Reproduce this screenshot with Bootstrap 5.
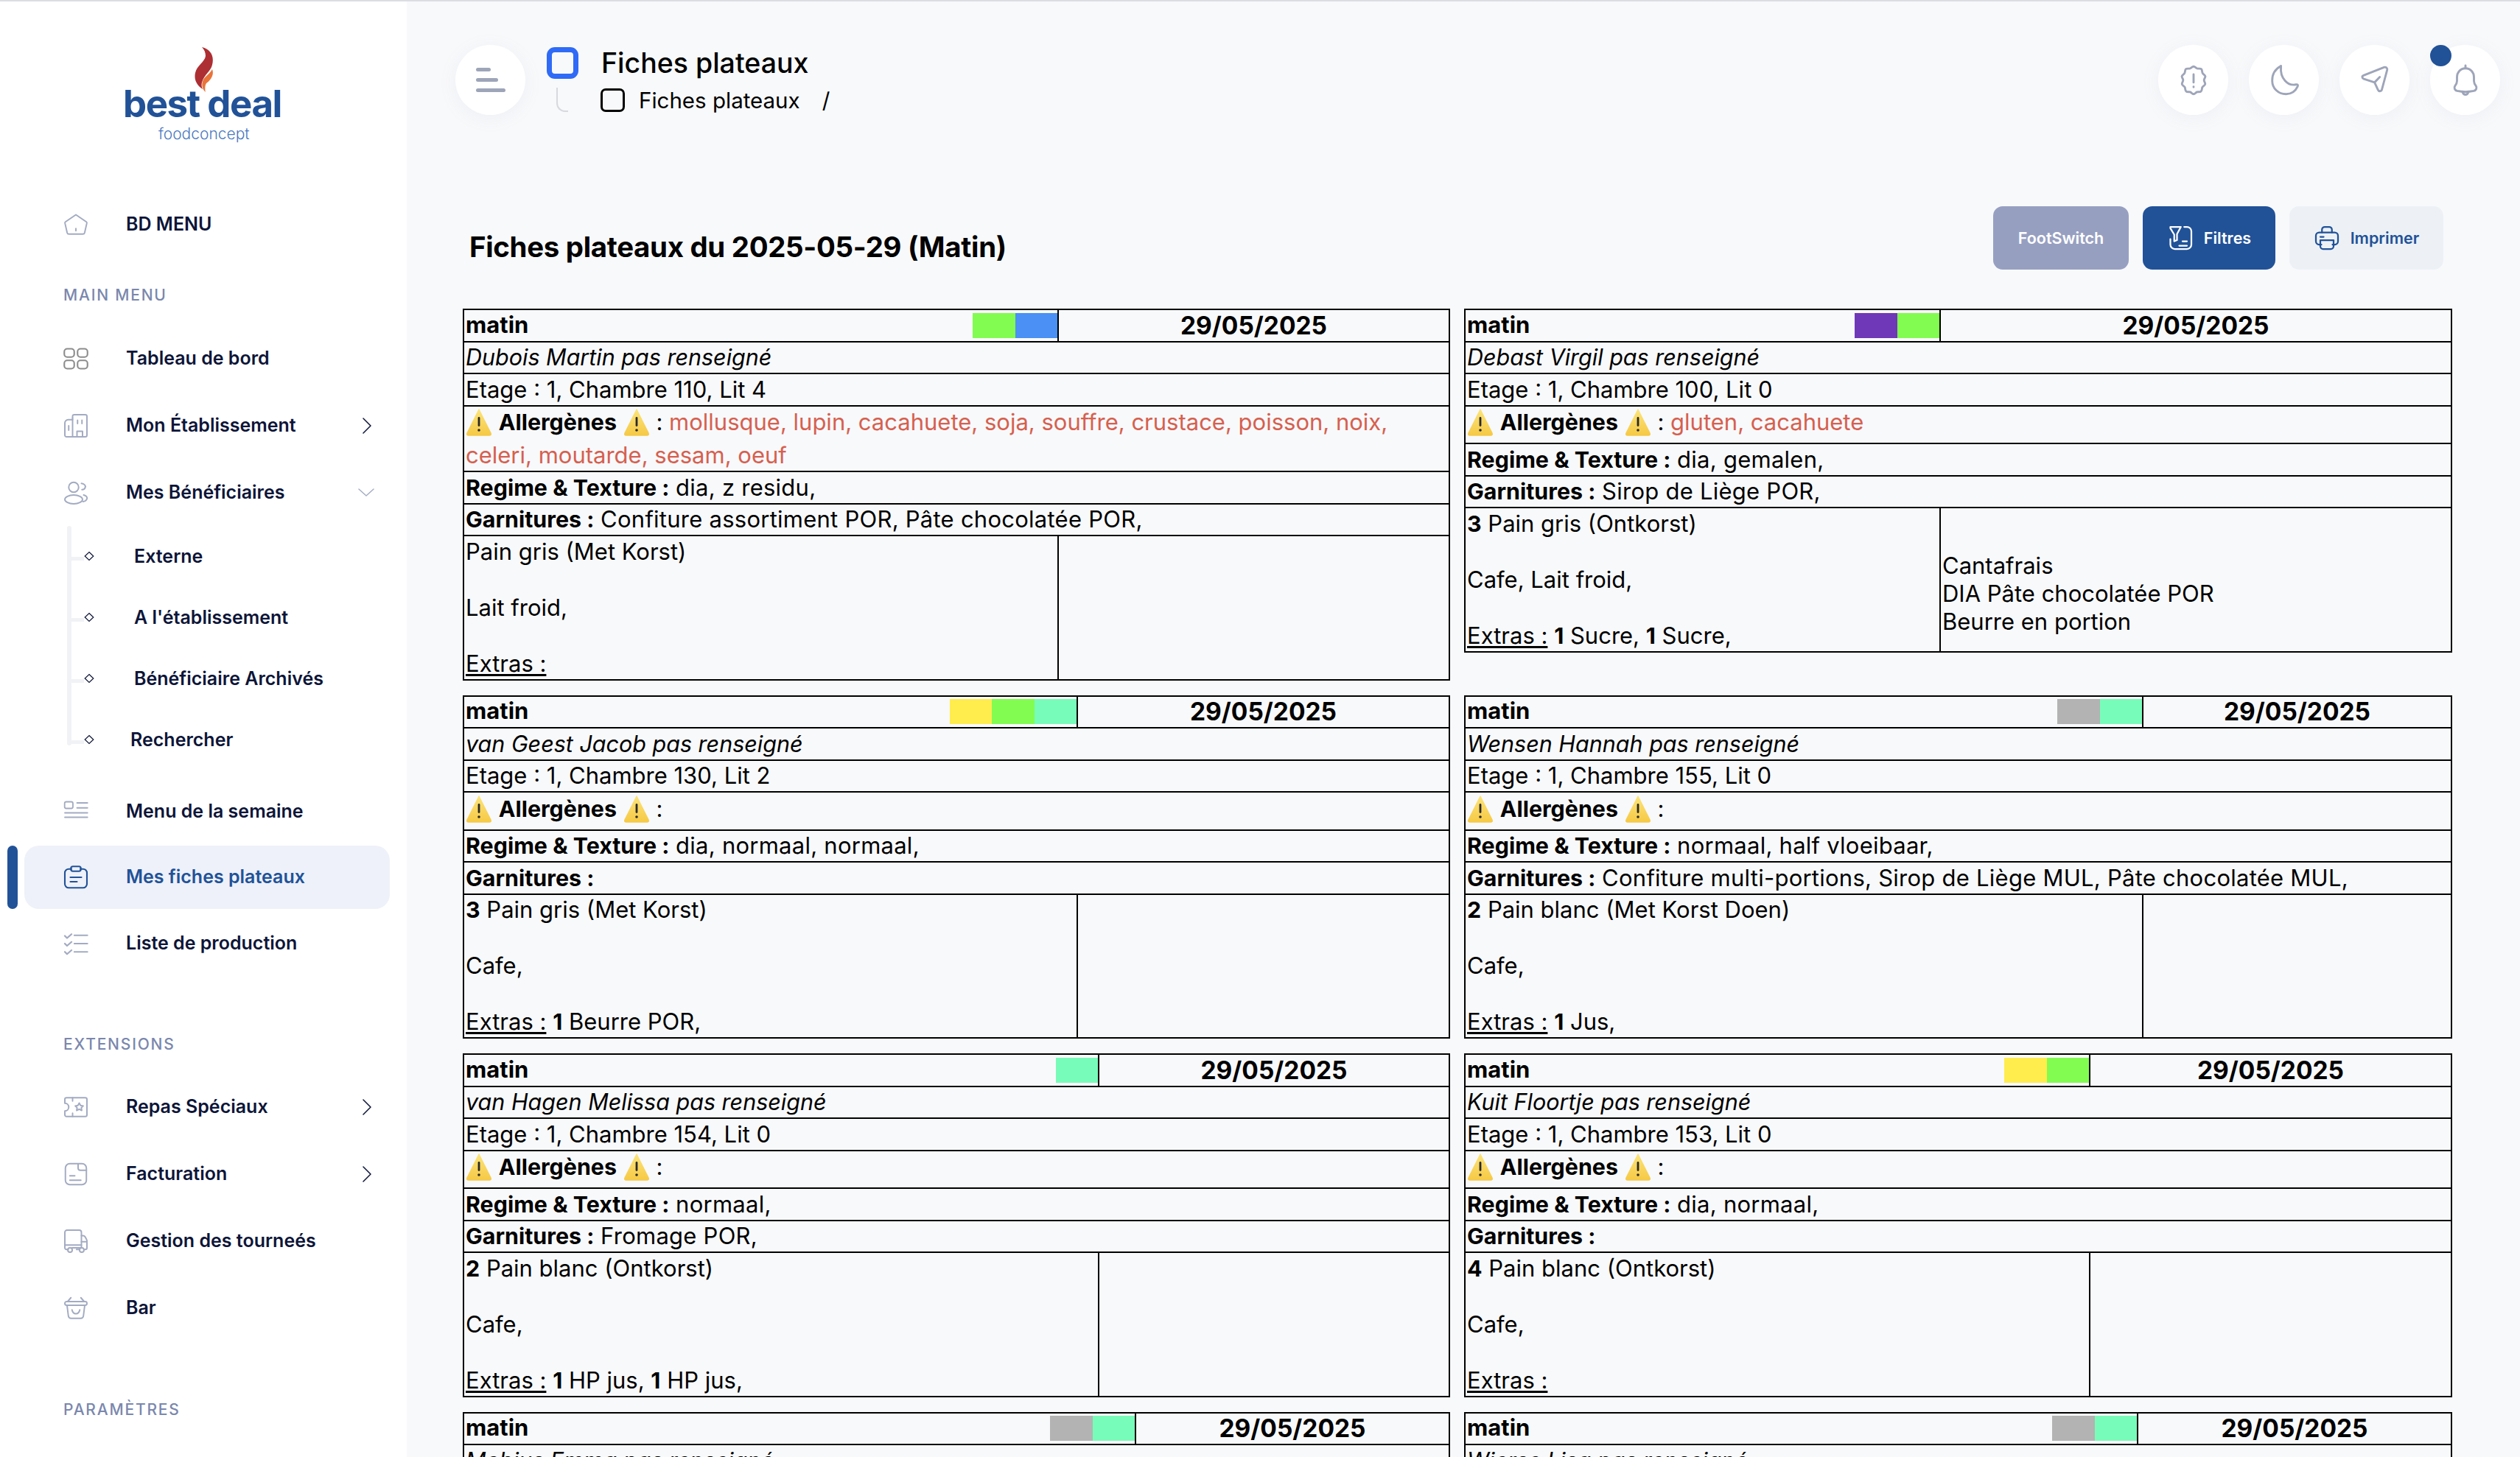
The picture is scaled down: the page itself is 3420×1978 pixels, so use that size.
<!DOCTYPE html>
<html lang="fr"><head><meta charset="utf-8"><title>Fiches plateaux</title>
<link rel="stylesheet" href="https://cdn.jsdelivr.net/npm/bootstrap@5.3.0/dist/css/bootstrap.min.css">
<style>
html,body{height:100%;overflow:hidden}
body{background:#f8f9fb;font-family:Inter,"Liberation Sans",sans-serif;color:#000;border-top:2px solid #dcdde2}
.shell{height:100%}
.side{width:552px;flex:none;background:#fff;height:100%;overflow:hidden;position:relative}
.logo-zone{height:260px;padding-top:62px;text-align:center;position:relative}
.flame{display:block;margin:0 auto 0 264px;width:26px;height:66px}
.bd-word{display:block;position:absolute;left:167px;top:109px;font-size:51px;font-weight:700;color:#215298;line-height:60px;letter-spacing:-1.5px}
.food-word{position:absolute;left:215px;top:167px;font-size:21px;font-weight:300;color:#4a78c0;line-height:26px}
.side-list{list-style:none;margin:0;padding:0}
.side-item{height:86px;margin:0 23px 5px 33px;padding-left:52px;display:flex;align-items:center;font-size:25px;font-weight:600;color:#0d1538;border-radius:20px;position:relative}
.side-item svg.ico{width:36px;height:36px;flex:none;margin-right:50px;color:#a3abc2}
.side-item .chev{margin-left:auto;margin-right:25px;width:12px;height:24px;color:#0d1538}
.side-item .chev-d{margin-left:auto;margin-right:21px;width:22px;height:12px;color:#a5adc4}
.side-label{margin:0 0 0 86px;font-size:21px;font-weight:500;letter-spacing:1.8px;color:#7a87ad;line-height:28px}
.sub-list{position:relative;margin:-3px 0 0;padding:0;list-style:none;height:333px}
.sub-item{height:83px;padding-left:182px;display:flex;align-items:center;font-size:25px;font-weight:600;color:#0d1538;position:relative}
.sub-item.sub-last{padding-left:177px}
.sub-rail{position:absolute;left:91px;top:0;width:6px;height:298px;background:#f1f2f5;border-radius:3px}
.sub-dash{position:absolute;left:91px;width:23px;height:5px;background:#f1f2f5;top:42px}
.sub-dia{position:absolute;left:114px;top:34px;width:14px;height:14px}
.side-item.on{background:#eef1f9;color:#215298;margin-bottom:4px}
.side-item.on svg.ico{color:#215298}
.side-item.on::before{content:"";position:absolute;left:-23px;top:0;bottom:0;width:14px;background:#215298;border-radius:7px}
.main-zone{flex:1;min-width:0;height:100%;overflow:hidden}
.topbar{height:278px;padding:59px 27px 0 66px;align-items:flex-start}
.round{width:95px;height:95px;border-radius:50%;background:#fff;box-shadow:0 4px 24px rgba(130,140,170,.09);position:relative;display:flex;align-items:center;justify-content:center;flex:none}
.bars i{display:block;height:5px;border-radius:3px;background:#9ea5b9;margin:9px 0}
.bars{width:40px}
.crumb-ico{width:43px;height:43px;border:7px solid #2f6bf6;border-radius:11px;margin:3px 0 0 29px;flex:none}
.crumb-tail{width:16px;height:33px;border-left:2px solid #d8d9dd;border-bottom:2px solid #d8d9dd;border-bottom-left-radius:12px;margin:12px 0 0 42px;display:block}
.crumb-title{font-size:37.500px;font-weight:500;line-height:44px;margin:3px 0 0 31px}
.crumb-sub{margin:12px 0 0 -18px;font-size:29.500px;line-height:32px}
.crumb-sub i{display:block;width:33px;height:32px;border:3px solid #000;border-radius:7px;margin:0 19px 0 48px}
.crumb-sep{margin-left:30px}
.tool-gap{gap:28px}
.round svg{width:46px;height:46px;color:#9ea5b9}
.dot{position:absolute;left:0;top:0;width:29px;height:29px;border-radius:50%;background:#215298}
.head-row{padding:0 104px 0 85px;height:86px;margin-bottom:53px}
.page-title{font-size:38.400px;font-weight:700;margin:24px 0 0;letter-spacing:-.3px}
.act{height:86px;border-radius:13px;border:0;font-size:21.500px;font-weight:600;display:inline-flex;align-items:center;justify-content:center;padding:0;gap:14px}
.act svg{width:36px;height:36px}
.act-a{width:184px;background:#979fc1;color:#fff}
.act-b{width:180px;background:#215298;color:#fff}
.act-c{width:209px;background:#edf1f6;color:#215298}
.act-row{gap:19px}
.sheets{margin:0 92px 0 76px;display:grid;grid-template-columns:1340px 1341px;column-gap:19px;row-gap:20px;align-items:start}
.sheet{width:100%;table-layout:fixed;border-collapse:collapse;border:2px solid #000;font-size:31px;line-height:38px;color:#000}
.sheet b{font-size:30.400px}
.sheet td{border:2px solid #000;padding:1.750px 2px;vertical-align:middle}
.sheet .topcell{padding:0 0 0 2px;font-weight:700;font-size:31px}
.sheet .topcell .kind{margin-bottom:2px}
.sheet .datecell{text-align:center;font-weight:700;font-size:33.500px}
.sheet em{font-size:30.500px}
.swatches{display:flex;height:34px}
.swatches span{width:57.500px;display:block}
.s-g{background:#82fc50}.s-b{background:#4a90f5}.s-y{background:#ffec4d}.s-t{background:#78fcb9}.s-p{background:#6f38b8}.s-n{background:#b3b3b3}
.warn{display:inline-block;width:36px;height:46px;vertical-align:middle;position:relative;top:-3px}
.red{color:#d6604f}
.val{letter-spacing:.25px}
.tall{vertical-align:top!important}
.sheet u{text-underline-offset:3px}
</style></head><body>
<svg width="0" height="0" class="d-block" style="position:absolute"><defs>
<linearGradient id="wg" x1="0" y1="0" x2="0" y2="1"><stop offset="0" stop-color="#fbe47a"/><stop offset="1" stop-color="#f6c945"/></linearGradient>
<symbol id="w" viewBox="0 0 36 46"><path d="M18 6 L34 38 Q35 41 32 41 H4 Q1 41 2 38 Z" fill="url(#wg)" stroke="url(#wg)" stroke-width="1.5" stroke-linejoin="round"/><rect x="16.600" y="16" width="2.800" height="13" rx="1.400" fill="#2a2a2a"/><circle cx="18" cy="34" r="1.800" fill="#2a2a2a"/></symbol>
</defs></svg>
<div class="shell d-flex">
<aside class="side">
 <div class="logo-zone">
  <svg class="flame" viewBox="0 0 26 66"><path d="M10 0 C22 3 27 12 24 24 C22 33 13 37 10 48 C9 52 10 55 11 57 C3 52-1 44 1 35 C3 25 14 20 15 12 C15 7 13 3 10 0Z" fill="#ad2f33"/><path d="M24 30 C27 37 22 45 16 49 C14 52 14 58 15 61 C10 57 9 50 12 44 C15 39 20 37 24 30Z" fill="#e8743a"/></svg>
  <span class="bd-word">best deal</span><span class="food-word">foodconcept</span>
 </div>
 <ul class="side-list">
  <li class="side-item" style="margin-bottom:39px"><svg class="ico" viewBox="0 0 24 24" fill="none" stroke="currentColor" stroke-width="1.300" stroke-linejoin="round" stroke-linecap="round"><path d="M12 3 21.500 9.500a1 1 0 0 1 .4 1.100l-2 8.700a1.600 1.600 0 0 1-1.600 1.200H5.700a1.600 1.600 0 0 1-1.600-1.200l-2-8.700a1 1 0 0 1 .4-1.100Z"/><path d="M12 15.500v2"/></svg>BD MENU</li>
 </ul>
 <div class="side-label" style="margin-bottom:29px">MAIN MENU</div>
 <ul class="side-list">
  <li class="side-item"><svg class="ico" viewBox="0 0 24 24" fill="none" stroke="#8c8c8c" stroke-width="1.400"><rect x="1.500" y="3" width="9" height="7.500" rx="2.600"/><rect x="13.500" y="3" width="9" height="7.500" rx="2.600"/><rect x="1.500" y="13.500" width="9" height="7.500" rx="2.600"/><rect x="13.500" y="13.500" width="9" height="7.500" rx="2.600"/></svg>Tableau de bord</li>
  <li class="side-item"><svg class="ico" viewBox="0 0 24 24" fill="none" stroke="currentColor" stroke-width="1.300" stroke-linecap="round" stroke-linejoin="round"><path d="M9 5V3.500A1.500 1.500 0 0 1 10.500 2h10A1.500 1.500 0 0 1 22 3.500V20.500A1.500 1.500 0 0 1 20.500 22H3.500A1.500 1.500 0 0 1 2 20.500V9.500A3 3 0 0 1 5 6.500H9"/><path d="M9 5V22M5.500 12v4M13.500 7v3M17.500 7v3M13 22v-5h5v5"/></svg>Mon Établissement<svg class="chev" viewBox="0 0 12 24" fill="none" stroke="currentColor" stroke-width="1.500" stroke-linecap="round" stroke-linejoin="round"><path d="M1 2 11 12 1 22"/></svg></li>
  <li class="side-item"><svg class="ico" viewBox="0 0 24 24" fill="none" stroke="currentColor" stroke-width="1.300" stroke-linecap="round"><circle cx="10" cy="7" r="4.500"/><ellipse cx="10" cy="18" rx="8" ry="4"/><path d="M17 3.500c2.500.3 4 1.800 3.500 3.500-.3 1.300-1.700 2.200-3 2.200M19 14c2.500.6 3.500 2 3 3.500-.4 1.200-1.800 2.200-3.500 2.500"/></svg>Mes Bénéficiaires<svg class="chev-d" viewBox="0 0 22 12" fill="none" stroke="currentColor" stroke-width="1.500" stroke-linecap="round" stroke-linejoin="round"><path d="M1 1 11 10 21 1"/></svg></li>
 </ul>
 <ul class="sub-list">
  <li class="sub-rail"></li>
  <li class="sub-item"><span class="sub-dash"></span><svg class="sub-dia" viewBox="0 0 14 14" fill="#fff" stroke="#0d1538" stroke-width="1.200"><path d="M7 1.500 12.800 7 7 12.500 1.200 7Z"/></svg>Externe</li>
  <li class="sub-item"><span class="sub-dash"></span><svg class="sub-dia" viewBox="0 0 14 14" fill="#fff" stroke="#0d1538" stroke-width="1.200"><path d="M7 1.500 12.800 7 7 12.500 1.200 7Z"/></svg>A l'établissement</li>
  <li class="sub-item"><span class="sub-dash"></span><svg class="sub-dia" viewBox="0 0 14 14" fill="#fff" stroke="#0d1538" stroke-width="1.200"><path d="M7 1.500 12.800 7 7 12.500 1.200 7Z"/></svg>Bénéficiaire Archivés</li>
  <li class="sub-item sub-last"><span class="sub-dash"></span><svg class="sub-dia" viewBox="0 0 14 14" fill="#fff" stroke="#0d1538" stroke-width="1.200"><path d="M7 1.500 12.800 7 7 12.500 1.200 7Z"/></svg>Rechercher</li>
 </ul>
 <ul class="side-list" style="margin-top:12px">
  <li class="side-item" style="margin-bottom:3px"><svg class="ico" viewBox="0 0 24 24" fill="none" stroke="currentColor" stroke-width="1.200" stroke-linecap="round"><rect x="1.800" y="3" width="7.500" height="6" rx="1.500"/><path d="M13 4h9.500M13 8.500h9.500M2 13h20.500M2 17h20.500"/></svg>Menu de la semaine</li>
  <li class="side-item on"><svg class="ico" viewBox="0 0 24 24" fill="none" stroke="currentColor" stroke-width="1.400" stroke-linecap="round" stroke-linejoin="round"><path d="M8 4.500H5.500A3.500 3.500 0 0 0 2 8v10a3.500 3.500 0 0 0 3.500 3.500h13A3.500 3.500 0 0 0 22 18V8a3.500 3.500 0 0 0-3.500-3.500H16"/><rect x="7.500" y="2.200" width="9" height="4.300" rx="1.800"/><path d="M7 12h10M7 16h6"/></svg>Mes fiches plateaux</li>
  <li class="side-item"><svg class="ico" viewBox="0 0 24 24" fill="none" stroke="currentColor" stroke-width="1.200" stroke-linecap="round" stroke-linejoin="round"><path d="M10.500 4.500h12M10.500 12h12M10.500 19.500h12"/><path d="M2 5l2 2 4-3.500M2 12l2 2 4-3.500M2 19.500l2 2 4-3.500" stroke-width="1.500"/></svg>Liste de production</li>
 </ul>
 <div class="side-label" style="margin-top:80px;margin-bottom:28px">EXTENSIONS</div>
 <ul class="side-list">
  <li class="side-item"><svg class="ico" viewBox="0 0 24 24" fill="none" stroke="currentColor" stroke-width="1.300" stroke-linecap="round" stroke-linejoin="round"><path d="M3.500 3.500h17A1.500 1.500 0 0 1 22 5v14a1.500 1.500 0 0 1-1.500 1.500h-17A1.500 1.500 0 0 1 2 19v-3.500c2 0 3.500-1.500 3.500-3.500S4 8.500 2 8.500V5a1.500 1.500 0 0 1 1.500-1.500Z"/><path d="M9 3.500v3M9 17.500v3"/><path d="M15 8.300l1.200 2.200 2.400.4-1.700 1.700.4 2.400-2.300-1.100-2.300 1.100.4-2.400-1.700-1.700 2.400-.4Z"/></svg>Repas Spéciaux<svg class="chev" viewBox="0 0 12 24" fill="none" stroke="currentColor" stroke-width="1.500" stroke-linecap="round" stroke-linejoin="round"><path d="M1 2 11 12 1 22"/></svg></li>
  <li class="side-item"><svg class="ico" viewBox="0 0 24 24" fill="none" stroke="currentColor" stroke-width="1.300" stroke-linecap="round" stroke-linejoin="round"><rect x="2.500" y="2.500" width="19" height="19" rx="4"/><path d="M14 3v3.500a2 2 0 0 0 2 2h5.500M6.500 13.500H11M6.500 17.500h10"/></svg>Facturation<svg class="chev" viewBox="0 0 12 24" fill="none" stroke="currentColor" stroke-width="1.500" stroke-linecap="round" stroke-linejoin="round"><path d="M1 2 11 12 1 22"/></svg></li>
  <li class="side-item"><svg class="ico" viewBox="0 0 24 24" fill="none" stroke="currentColor" stroke-width="1.300" stroke-linecap="round" stroke-linejoin="round"><path d="M5 19.500H3.500A1.500 1.500 0 0 1 2 18V4a2 2 0 0 1 2-2h11a2 2 0 0 1 2 2v14H8.500"/><path d="M17 7h1.500a2 2 0 0 1 1.700.9l1.400 2.500c.3.400.4.800.4 1.300V18a1.500 1.500 0 0 1-1.500 1.500H20M17 12.500h5M2 15.500h15M12.500 19.500H15"/><circle cx="6.700" cy="20" r="2"/><circle cx="17.300" cy="20" r="2"/></svg>Gestion des tourneés</li>
  <li class="side-item"><svg class="ico" viewBox="0 0 24 24" fill="none" stroke="currentColor" stroke-width="1.300" stroke-linecap="round" stroke-linejoin="round"><path d="M7.500 2.500 4.500 6M16.500 2.500l3 3.500"/><rect x="2" y="6" width="20" height="3.300" rx="1.600"/><path d="M4 9.500l1.200 9.500a2.500 2.500 0 0 0 2.500 2.200h8.600a2.500 2.500 0 0 0 2.500-2.200L20 9.500M8.500 13.500c.5 2.500 2 3.500 3.500 3.500s3-1 3.500-3.500"/></svg>Bar</li>
 </ul>
 <div class="side-label" style="margin-top:81px">PARAMÈTRES</div>
</aside>
<main class="main-zone">
 <header class="topbar d-flex">
  <button type="button" class="round border-0 p-0"><span class="bars"><i style="width:20px"></i><i style="width:30px"></i><i></i></span></button>
  <div><div class="crumb-ico"></div><span class="crumb-tail"></span></div>
  <div class="flex-grow-0">
   <div class="crumb-title">Fiches plateaux</div>
   <div class="crumb-sub d-flex align-items-center"><i></i>Fiches plateaux<span class="crumb-sep">/</span></div>
  </div>
  <div class="ms-auto d-flex tool-gap">
   <div class="round"><svg viewBox="0 0 24 24" fill="none" stroke="currentColor" stroke-width="1.500" stroke-linecap="round" stroke-linejoin="round"><path d="M12 2.200c1 0 1.600 1.100 2.500 1.400 1 .3 2.300-.2 3 .5s.4 2 .9 2.900c.4.800 1.700 1.200 1.900 2.200.1 1-.9 1.700-.9 2.700 0 1 1 1.800.8 2.800-.2 1-1.500 1.300-2 2.200-.4.900-.1 2.200-.9 2.900-.7.700-2 .2-2.900.5-.9.400-1.400 1.500-2.400 1.500s-1.500-1.100-2.400-1.500c-.9-.3-2.200.2-2.900-.5-.8-.7-.5-2-.9-2.900-.5-.9-1.800-1.200-2-2.200-.2-1 .8-1.800.8-2.800s-1-1.700-.9-2.700c.2-1 1.500-1.400 1.900-2.200.5-.9.200-2.200.9-2.900s2-.2 3-.5c.9-.3 1.500-1.400 2.500-1.400Z"/><path d="M12 7.800v5.700M12 16.500v.3"/></svg></div>
   <div class="round"><svg viewBox="0 0 24 24" fill="none" stroke="currentColor" stroke-width="1.500" stroke-linecap="round" stroke-linejoin="round"><path d="M9.500 2C5.500 4.200 3.500 8 3.500 12.200c0 5.500 4.300 9.600 9.800 9.600 3.800 0 6.600-2 8.200-5.400.5-1-.1-1.600-1-1.400-6 1.300-11.600-4.500-10.800-12.600.1-.6 0-.8-.2-.4Z"/></svg></div>
   <div class="round"><svg viewBox="0 0 24 24" fill="none" stroke="currentColor" stroke-width="1.500" stroke-linecap="round" stroke-linejoin="round"><path d="M4 8.500 18.500 2.800c1.300-.5 2.500.6 2.200 1.900L17 18.500c-.4 1.500-2.200 1.600-2.800.2l-2.400-5.200-7.600-2.500c-1.400-.5-1.500-2-.2-2.500Z"/><path d="M11.800 13.500l3.700-3.800"/></svg></div>
   <div class="round"><span class="dot"></span><svg viewBox="0 0 24 24" fill="none" stroke="currentColor" stroke-width="1.500" stroke-linecap="round" stroke-linejoin="round"><path d="M12 3.500c-3.500 0-6 2.800-6 6.300v2.700c0 1.500-.6 2.400-1.400 3.500-.9 1.300-.3 3 1.500 3.500 3.800.8 8 .8 11.800 0 1.800-.5 2.400-2.200 1.500-3.500-.8-1.100-1.400-2-1.400-3.500V9.800c0-3.500-2.500-6.300-6-6.300Z"/><path d="M12 1.500v2M9.800 20c.4 1.400 1.200 2.200 2.200 2.200s1.800-.8 2.200-2.200"/></svg></div>
  </div>
 </header>
 <div class="head-row d-flex align-items-center justify-content-between">
  <h1 class="page-title">Fiches plateaux du 2025-05-29 (Matin)</h1>
  <div class="d-flex act-row">
   <button type="button" class="act act-a">FootSwitch</button>
   <button type="button" class="act act-b"><svg viewBox="0 0 24 24" fill="none" stroke="currentColor" stroke-width="1.500" stroke-linecap="round" stroke-linejoin="round"><path d="M3 2h9.500l-3.500 6.500v5.500l-2.500 1V9L3 3.200Z"/><path d="M15.500 2H18a4 4 0 0 1 4 4v12a4 4 0 0 1-4 4H7a4 4 0 0 1-4-4v-5"/><path d="M14 15h4M11 19h7"/></svg>Filtres</button>
   <button type="button" class="act act-c"><svg viewBox="0 0 24 24" fill="none" stroke="currentColor" stroke-width="1.500" stroke-linecap="round" stroke-linejoin="round"><path d="M7.500 7V4.500A2.500 2.500 0 0 1 10 2h4a2.500 2.500 0 0 1 2.500 2.500V7"/><path d="M7 18H5a3 3 0 0 1-3-3v-5a3 3 0 0 1 3-3h14a3 3 0 0 1 3 3v5a3 3 0 0 1-3 3h-2"/><path d="M6 14h12v5.500a2.500 2.500 0 0 1-2.500 2.500h-7A2.500 2.500 0 0 1 6 19.500Z"/><path d="M6 11h3"/></svg>Imprimer</button>
  </div>
 </div>
 <section class="sheets" id="sheets"></section>
</main>
</div>
<script>
const W='<svg class="warn"><use href="#w"/></svg>';
const data=[
{c:807,sw:['g','b'],n:'Dubois Martin',e:'1, Chambre 110, Lit 4',a:'mollusque, lupin, cacahuete, soja, souffre, crustace, poisson, noix,<br>celeri, moutarde, sesam, oeuf',r:'dia, z residu,',g:'Confiture assortiment POR, Pâte chocolatée POR,',b:'Pain gris (Met Korst)',d:'Lait froid,',x:''},
{c:645,sw:['p','g'],n:'Debast Virgil',e:'1, Chambre 100, Lit 0',a:'gluten, cacahuete',r:'dia, gemalen,',g:'Sirop de Liège POR,',b:'<b>3</b> Pain gris (Ontkorst)',d:'Cafe, Lait froid,',x:'<b>1</b> Sucre, <b>1</b> Sucre,',o:'<br>Cantafrais<br>DIA Pâte chocolatée POR<br>Beurre en portion'},
{c:833,sw:['y','g','t'],n:'van Geest Jacob',e:'1, Chambre 130, Lit 2',a:'',r:'dia, normaal, normaal,',g:'',b:'<b>3</b> Pain gris (Met Korst)',d:'Cafe,',x:'<b>1</b> Beurre POR,'},
{c:920,sw:['n','t'],n:'Wensen Hannah',e:'1, Chambre 155, Lit 0',a:'',r:'normaal, half vloeibaar,',g:'Confiture multi-portions, Sirop de Liège MUL, Pâte chocolatée MUL,',b:'<b>2</b> Pain blanc (Met Korst Doen)',d:'Cafe,',x:'<b>1</b> Jus,'},
{c:862,sw:['t'],n:'van Hagen Melissa',e:'1, Chambre 154, Lit 0',a:'',r:'normaal,',g:'Fromage POR,',b:'<b>2</b> Pain blanc (Ontkorst)',d:'Cafe,',x:'<b>1</b> HP jus, <b>1</b> HP jus,'},
{c:848,sw:['y','g'],n:'Kuit Floortje',e:'1, Chambre 153, Lit 0',a:'',r:'dia, normaal,',g:'',b:'<b>4</b> Pain blanc (Ontkorst)',d:'Cafe,',x:''},
{c:912,sw:['n','t'],n:'Mobius Emma',e:'1, Chambre 120, Lit 0',a:'',r:'',g:'',b:'',d:'',x:''},
{c:913,sw:['n','t'],n:'Wierse Lisa',e:'1, Chambre 121, Lit 0',a:'',r:'',g:'',b:'',d:'',x:''}];
document.getElementById('sheets').innerHTML=data.map(s=>`<table class="sheet"><colgroup><col style="width:${s.c}px"><col></colgroup>
<tr><td class="topcell"><div class="d-flex justify-content-between align-items-center"><span class="kind">matin</span><span class="swatches">${s.sw.map(k=>`<span class="s-${k}"></span>`).join('')}</span></div></td><td class="datecell">29/05/2025</td></tr>
<tr><td colspan="2"><em>${s.n} pas renseigné</em></td></tr>
<tr><td colspan="2">Etage : ${s.e}</td></tr>
<tr><td colspan="2">${W} <b>Allergènes</b> ${W} : <span class="red">${s.a}</span></td></tr>
<tr><td colspan="2"><b>Regime &amp; Texture :</b> <span class="val">${s.r}</span></td></tr>
<tr><td colspan="2"><b>Garnitures :</b> <span class="val">${s.g}</span></td></tr>
<tr><td class="tall">${s.b}<br><br>${s.d}<br><br><u>Extras :</u> ${s.x}</td><td>${s.o||''}</td></tr></table>`).join('');
</script>
<script src="https://cdn.jsdelivr.net/npm/bootstrap@5.3.0/dist/js/bootstrap.bundle.min.js"></script>
</body></html>
